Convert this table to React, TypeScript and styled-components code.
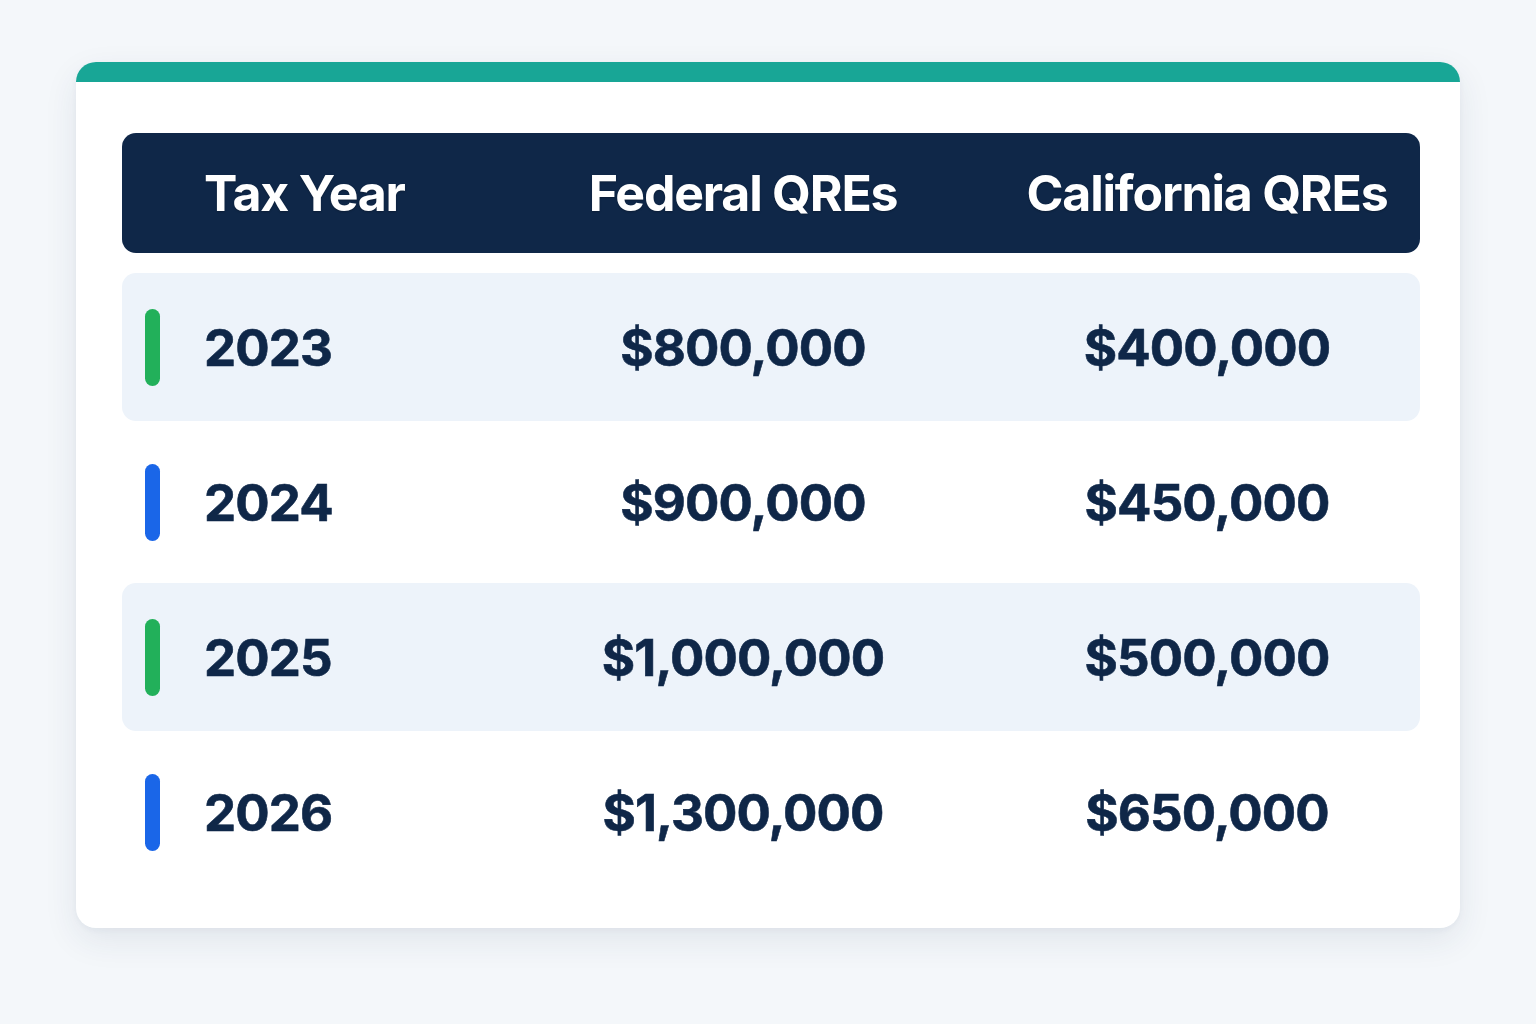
import React from "react";
import styled, { createGlobalStyle } from "styled-components";

const Global = createGlobalStyle`
  html, body { margin: 0; padding: 0; background: #f4f7fa; }
  body { font-family: Inter, "Noto Sans", sans-serif; -webkit-font-smoothing: antialiased; }
`;

const Page = styled.div`
  width: 1536px;
  height: 1024px;
  box-sizing: border-box;
  padding: 62px 76px 0 76px;
  background: #f4f7fa;
`;

const Card = styled.div`
  width: 1384px;
  height: 866px;
  box-sizing: border-box;
  background: #ffffff;
  border-radius: 20px;
  overflow: hidden;
  box-shadow: 0 12px 34px rgba(30, 50, 90, 0.09), 0 2px 6px rgba(30, 50, 90, 0.04);
  display: flex;
  flex-direction: column;
`;

const TopBar = styled.div`
  height: 20px;
  background: #18a696;
  flex: none;
`;

const Body = styled.div`
  padding: 51px 40px 0 46px;
  display: flex;
  flex-direction: column;
`;

const Grid = styled.div`
  display: grid;
  grid-template-columns: 59px 288px 502px 1fr;
  align-items: center;
  box-sizing: border-box;
  padding-left: 23px;
  border-radius: 14px;
`;

const Header = styled(Grid)`
  height: 120px;
  background: #0f2748;
  color: #ffffff;
  margin-bottom: 20px;
  font-size: 50px;
  font-weight: 700;
  letter-spacing: -1.2px;
  text-shadow: 0 1px 2px rgba(0, 0, 0, 0.25);
`;

const Row = styled(Grid)<{ $striped: boolean }>`
  height: 148px;
  margin-bottom: 7px;
  background: ${(p) => (p.$striped ? "#edf3fa" : "transparent")};
  color: #0f2748;
  font-size: 51px;
  font-weight: 700;
  letter-spacing: -0.9px;
  -webkit-text-stroke: 0.6px #0f2748;
`;

const Bar = styled.div<{ $color: string }>`
  width: 15px;
  height: 77px;
  border-radius: 8px;
  background: ${(p) => p.$color};
`;

const Cell = styled.div<{ $align?: "left" | "center" }>`
  text-align: ${(p) => p.$align ?? "center"};
  white-space: nowrap;
`;

const rows = [
  { year: "2023", fed: "$800,000", ca: "$400,000", color: "#22b05a" },
  { year: "2024", fed: "$900,000", ca: "$450,000", color: "#1a66e8" },
  { year: "2025", fed: "$1,000,000", ca: "$500,000", color: "#22b05a" },
  { year: "2026", fed: "$1,300,000", ca: "$650,000", color: "#1a66e8" },
];

export default function App() {
  return (
    <>
      <Global />
      <Page>
        <Card>
          <TopBar />
          <Body>
            <Header>
              <span />
              <Cell $align="left">Tax Year</Cell>
              <Cell>Federal QREs</Cell>
              <Cell>California QREs</Cell>
            </Header>
            {rows.map((r, i) => (
              <Row key={r.year} $striped={i % 2 === 0}>
                <Bar $color={r.color} />
                <Cell $align="left">{r.year}</Cell>
                <Cell>{r.fed}</Cell>
                <Cell>{r.ca}</Cell>
              </Row>
            ))}
          </Body>
        </Card>
      </Page>
    </>
  );
}
